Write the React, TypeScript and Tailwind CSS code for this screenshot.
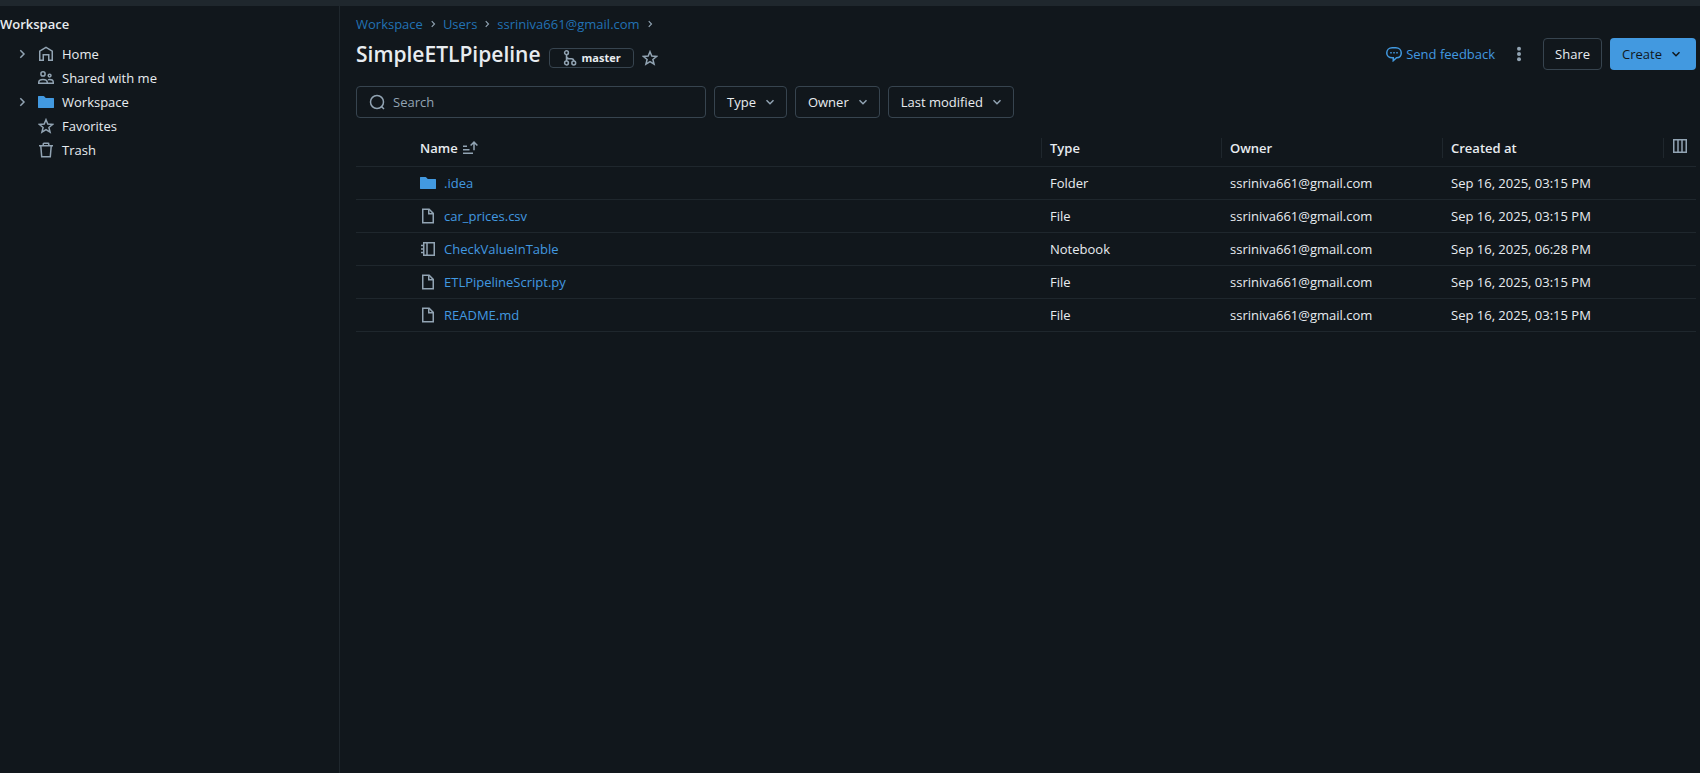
import React, { type ReactNode } from "react";

type IconProps = { className?: string };

function Icon({ className = "", size = "size-4", children }: IconProps & { size?: string; children: ReactNode }) {
  return (
    <svg
      viewBox="0 0 16 16"
      fill="none"
      stroke="currentColor"
      strokeWidth="1.5"
      aria-hidden="true"
      className={`${size} shrink-0 ${className}`}
    >
      {children}
    </svg>
  );
}

const HomeIcon = () => (
  <Icon>
    <path d="M1.75 5.1 8 1.4l6.25 3.7v9.15h-3.5V8.75h-5.5v5.5h-3.5z" />
  </Icon>
);

const SharedIcon = () => (
  <Icon>
    <circle cx="5" cy="3.9" r="2.1" />
    <circle cx="11.6" cy="5.6" r="1.4" />
    <path d="M.75 13.25v-.9C.75 10.5 2.6 9.5 5 9.5s4.25 1 4.25 2.85v.9z" />
    <path d="M10 9.9c.5-.2 1-.3 1.6-.3 2.1 0 3.65.9 3.65 2.6v1.05h-6" />
  </Icon>
);

const FolderIcon = ({ className = "" }: IconProps) => (
  <Icon className={className}>
    <path
      fill="currentColor"
      stroke="none"
      d="M.4 2a.4.4 0 0 0-.4.4v11.2c0 .22.18.4.4.4h15.2a.4.4 0 0 0 .4-.4V4.4a.4.4 0 0 0-.4-.4H7.8L6.1 2.3A1 1 0 0 0 5.37 2z"
    />
  </Icon>
);

const StarIcon = ({ className = "" }: IconProps) => (
  <Icon className={className}>
    <path d="M8 1.7 9.8 6.1l4.7.35-3.6 3.05 1.15 4.6L8 11.6l-4.05 2.5L5.1 9.5 1.5 6.45l4.7-.35z" />
  </Icon>
);

const TrashIcon = () => (
  <Icon>
    <path d="M1 3.75h14M5.25 3.5V1.9c0-.4.25-.65.65-.65h4.2c.4 0 .65.25.65.65v1.6M2.8 4l.9 10.75h8.6L13.2 4" />
  </Icon>
);

const BranchIcon = () => (
  <Icon>
    <circle cx="4.5" cy="2.75" r="1.9" />
    <circle cx="4.5" cy="13" r="1.9" />
    <circle cx="11.75" cy="13" r="1.9" />
    <path d="M4.5 4.65v6.45M4.5 6.5c.3 1.6 1.3 2.25 2.8 2.25h2.2c1.5 0 2.25.8 2.25 2.35" />
  </Icon>
);

const SearchIcon = () => (
  <Icon>
    <circle cx="8" cy="8" r="6.5" />
    <path d="m12.2 12.2 2.8 2.8" />
  </Icon>
);

const SortIcon = () => (
  <Icon>
    <path d="M1 6.25h4M1 9.75h6.5M1 13.25h10M12 10.2V2.2M8.6 5.5 12 2.1l3.4 3.4" />
  </Icon>
);

const FileIcon = () => (
  <Icon>
    <path d="M2.75 1.25h6.4l4.1 4.1v9.4H2.75z" />
    <path d="M8.75 1.25v4.5h4.5" />
  </Icon>
);

const NotebookIcon = () => (
  <Icon>
    <path d="M3.75 1.75h10.5v12.5H3.75zM7 1.75v12.5M1 4.5h2.75M1 8h2.75M1 11.5h2.75" />
  </Icon>
);

const FeedbackIcon = () => (
  <Icon>
    <path d="M6.2 11.75C3 11.75.75 9.7.75 6.9S3 1.75 6.2 1.75h3.6c3.2 0 5.45 2.35 5.45 5.15 0 2.7-2 4.7-4.7 4.85L7.25 14.7v-2.95z" />
    <path d="M4.25 6.75h1.5M7.25 6.75h1.5M10.25 6.75h1.5" />
  </Icon>
);

const ColumnsIcon = () => (
  <Icon>
    <path d="M1.75 1.75h12.5v12.5H1.75zM6 1.75v12.5M10 1.75v12.5" />
  </Icon>
);

const DotsIcon = () => (
  <Icon>
    <g fill="currentColor" stroke="none">
      <circle cx="8" cy="2.8" r="2" />
      <circle cx="8" cy="8" r="2" />
      <circle cx="8" cy="13.2" r="2" />
    </g>
  </Icon>
);

const ChevronRight = ({ className = "", size = "size-4" }: IconProps & { size?: string }) => (
  <Icon className={className} size={size}>
    <path d="m6.3 4.3 3.7 3.7-3.7 3.7" />
  </Icon>
);

const ChevronDown = ({ className = "" }: IconProps) => (
  <Icon className={className}>
    <path d="M4.5 6.3 8 9.8l3.5-3.5" />
  </Icon>
);

const navItems = [
  { label: "Home", icon: <HomeIcon />, expandable: true },
  { label: "Shared with me", icon: <SharedIcon />, expandable: false },
  { label: "Workspace", icon: <FolderIcon className="text-[#4299e0]" />, expandable: true },
  { label: "Favorites", icon: <StarIcon />, expandable: false },
  { label: "Trash", icon: <TrashIcon />, expandable: false },
];

const crumbs = ["Workspace", "Users", "ssriniva661@gmail.com"];

const files = [
  { name: ".idea", type: "Folder", created: "Sep 16, 2025, 03:15 PM" },
  { name: "car_prices.csv", type: "File", created: "Sep 16, 2025, 03:15 PM" },
  { name: "CheckValueInTable", type: "Notebook", created: "Sep 16, 2025, 06:28 PM" },
  { name: "ETLPipelineScript.py", type: "File", created: "Sep 16, 2025, 03:15 PM" },
  { name: "README.md", type: "File", created: "Sep 16, 2025, 03:15 PM" },
];

function TypeIcon({ type }: { type: string }) {
  if (type === "Folder") return <FolderIcon className="text-[#4299e0]" />;
  if (type === "Notebook") return <NotebookIcon />;
  return <FileIcon />;
}

function Sidebar() {
  return (
    <aside className="w-[340px] shrink-0 border-r border-[#1f272d] pt-2">
      <h2 className="text-[13px] leading-5 font-semibold">Workspace</h2>
      <nav aria-label="Workspace" className="pt-2">
        <ul>
          {navItems.map((item) => (
            <li key={item.label} className="flex h-6 items-center pl-3.5">
              <span className="flex w-6 text-[#92a4b3]">
                {item.expandable && (
                  <button type="button" aria-label={`Expand ${item.label}`}>
                    <ChevronRight />
                  </button>
                )}
              </span>
              <a href="#" className="flex items-center gap-2 text-[#92a4b3]">
                {item.icon}
                <span className="text-[#e8ecf0]">{item.label}</span>
              </a>
            </li>
          ))}
        </ul>
      </nav>
    </aside>
  );
}

function FilterButton({ label }: { label: string }) {
  return (
    <button
      type="button"
      aria-haspopup="menu"
      className="flex h-8 items-center gap-1.5 rounded border border-[#37444f] pr-2 pl-3 shadow-xs"
    >
      {label}
      <ChevronDown className="text-[#92a4b3]" />
    </button>
  );
}

function ColumnHead({ label }: { label: string }) {
  return (
    <th scope="col" className="p-0 font-semibold">
      <div className="h-5 border-l border-[#1f272d] pl-2">{label}</div>
    </th>
  );
}

export default function App() {
  return (
    <div className="flex min-h-screen flex-col bg-[#11171c] font-['Segoe_UI','Open_Sans','Noto_Sans',sans-serif] text-[13px] leading-5 text-[#e8ecf0]">
      <div className="h-1.5 bg-[#1f272d]" />
      <div className="flex flex-1">
        <Sidebar />
        <main className="min-w-0 flex-1 pt-2 pr-1 pl-4">
          <header className="flex items-end justify-between">
            <div>
              <nav aria-label="Breadcrumb">
                <ol className="flex">
                  {crumbs.map((crumb) => (
                    <li key={crumb} className="flex items-center">
                      <a href="#" className="text-[#2272b4]">
                        {crumb}
                      </a>
                      <ChevronRight size="size-3" className="mx-1 text-[#92a4b3]" />
                    </li>
                  ))}
                </ol>
              </nav>
              <div className="mt-1.5 flex items-center gap-2">
                <h1 className="pb-0.5 text-[21px] leading-7 font-semibold">SimpleETLPipeline</h1>
                <button
                  type="button"
                  className="mt-1.5 flex h-5 items-center gap-1 rounded border border-[#37444f] px-3 text-[11px] font-bold"
                >
                  <span className="text-[#92a4b3]">
                    <BranchIcon />
                  </span>
                  master
                </button>
                <button type="button" aria-label="Add to favorites" className="mt-1.5 text-[#92a4b3]">
                  <StarIcon />
                </button>
              </div>
            </div>
            <div className="flex items-center gap-2">
              <a href="#" className="flex items-center gap-1 text-[#4299e0]">
                <FeedbackIcon />
                Send feedback
              </a>
              <button
                type="button"
                aria-label="More options"
                className="flex size-8 items-center justify-center text-[#92a4b3]"
              >
                <DotsIcon />
              </button>
              <button type="button" className="h-8 rounded border border-[#37444f] px-[11px]">
                Share
              </button>
              <button
                type="button"
                aria-haspopup="menu"
                className="flex h-8 items-center gap-1.5 rounded bg-[#4299e0] px-3 text-[#11171c]"
              >
                Create
                <ChevronDown />
              </button>
            </div>
          </header>

          <div className="mt-4 flex gap-2">
            <label className="flex h-8 w-[350px] items-center gap-2 rounded border border-[#37444f] px-3 text-[#92a4b3]">
              <SearchIcon />
              <input
                type="search"
                aria-label="Search"
                placeholder="Search"
                className="min-w-0 flex-1 bg-transparent outline-none placeholder:text-[#92a4b3]"
              />
            </label>
            <FilterButton label="Type" />
            <FilterButton label="Owner" />
            <FilterButton label="Last modified" />
          </div>

          <table className="mt-3 w-full table-fixed text-left">
            <colgroup>
              <col />
              <col className="w-[180px]" />
              <col className="w-[221px]" />
              <col className="w-[221px]" />
              <col className="w-[33px]" />
            </colgroup>
            <thead>
              <tr className="h-9 border-b border-[#1f272d]">
                <th scope="col" className="p-0 pl-16 font-semibold">
                  <span className="flex items-center gap-1">
                    Name
                    <span className="text-[#92a4b3]">
                      <SortIcon />
                    </span>
                  </span>
                </th>
                <ColumnHead label="Type" />
                <ColumnHead label="Owner" />
                <ColumnHead label="Created at" />
                <th scope="col" className="p-0">
                  <div className="flex h-5 border-l border-[#1f272d] pl-2 text-[#92a4b3]">
                    <button type="button" aria-label="Select columns" className="h-4">
                      <ColumnsIcon />
                    </button>
                  </div>
                </th>
              </tr>
            </thead>
            <tbody>
              {files.map((file) => (
                <tr key={file.name} className="h-[33px] border-b border-[#1f272d]">
                  <td className="p-0 pl-16">
                    <span className="flex items-center gap-2 text-[#92a4b3]">
                      <TypeIcon type={file.type} />
                      <a href="#" className="text-[#4299e0]">
                        {file.name}
                      </a>
                    </span>
                  </td>
                  <td className="p-0 pl-[9px]">{file.type}</td>
                  <td className="p-0 pl-[9px]">ssriniva661@gmail.com</td>
                  <td className="p-0 pl-[9px]">{file.created}</td>
                  <td className="p-0" />
                </tr>
              ))}
            </tbody>
          </table>
        </main>
      </div>
    </div>
  );
}
